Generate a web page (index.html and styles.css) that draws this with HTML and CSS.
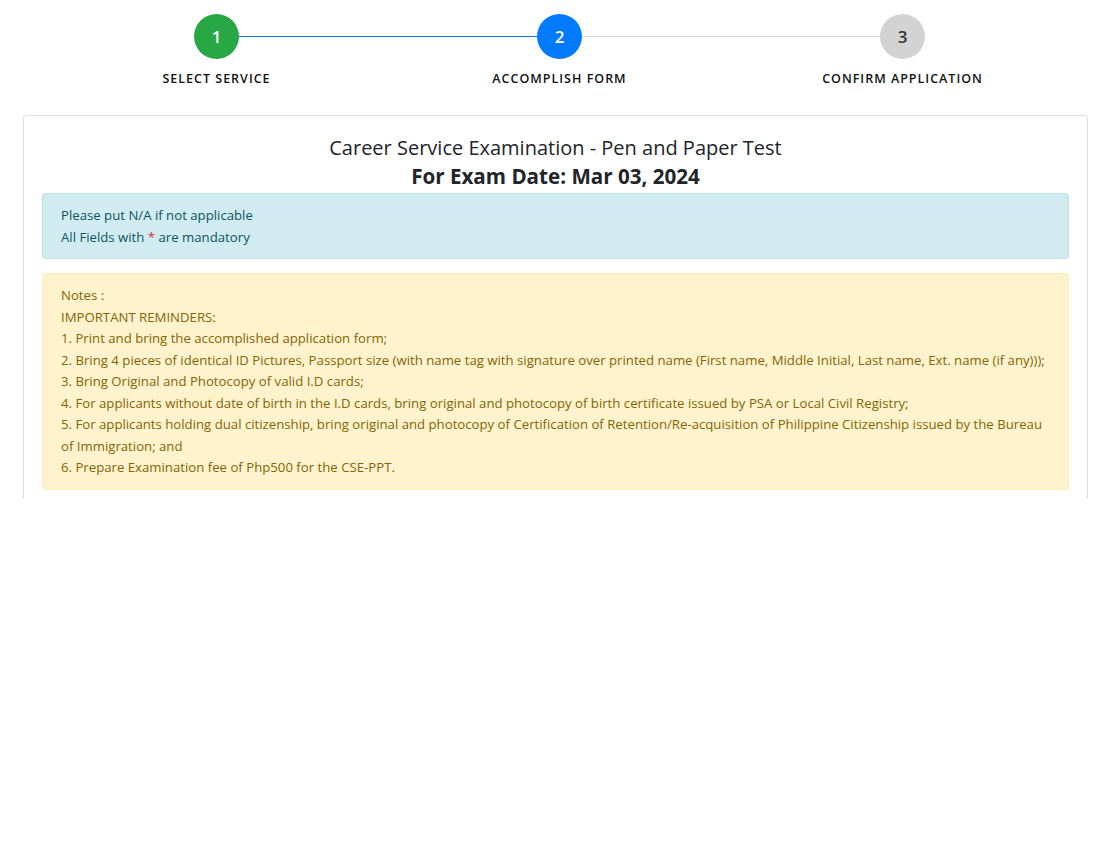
FILE: index.html
```html
<!DOCTYPE html>
<html lang="en">
<head>
<meta charset="utf-8">
<title>Career Service Examination - Application</title>
<link rel="stylesheet" href="styles.css">
</head>
<body>
<div class="stepper">
  <div class="step done">
    <div class="track"><span class="line line-left"></span><span class="circle">1</span><span class="line line-right active"></span></div>
    <div class="label">Select Service</div>
  </div>
  <div class="step current">
    <div class="track"><span class="line line-left active"></span><span class="circle">2</span><span class="line line-right"></span></div>
    <div class="label">Accomplish Form</div>
  </div>
  <div class="step todo">
    <div class="track"><span class="line line-left"></span><span class="circle">3</span><span class="line line-right"></span></div>
    <div class="label">Confirm Application</div>
  </div>
</div>

<div class="card">
  <h1 class="title">
    <span class="title-main">Career Service Examination - Pen and Paper Test</span>
    <span class="title-date">For Exam Date: Mar 03, 2024</span>
  </h1>
  <div class="alert alert-info">
    Please put N/A if not applicable<br>
    All Fields with <span class="req">*</span> are mandatory
  </div>
  <div class="alert alert-warning">
    Notes :<br>
    IMPORTANT REMINDERS:<br>
    1. Print and bring the accomplished application form;<br>
    2. Bring 4 pieces of identical ID Pictures, Passport size (with name tag with signature over printed name (First name, Middle Initial, Last name, Ext. name (if any)));<br>
    3. Bring Original and Photocopy of valid I.D cards;<br>
    4. For applicants without date of birth in the I.D cards, bring original and photocopy of birth certificate issued by PSA or Local Civil Registry;<br>
    5. For applicants holding dual citizenship, bring original and photocopy of Certification of Retention/Re-acquisition of Philippine Citizenship issued by the Bureau of Immigration; and<br>
    6. Prepare Examination fee of Php500 for the CSE-PPT.
  </div>
</div>
</body>
</html>
```
FILE: styles.css
```css
* { box-sizing: border-box; }
body {
  margin: 0;
  background: #fff;
  font-family: "Open Sans", "Noto Sans", sans-serif;
  color: #212529;
}
.stepper {
  display: flex;
  padding: 14px 0 0 45px;
}
.step {
  width: 343px;
  display: flex;
  flex-direction: column;
  align-items: center;
}
.track {
  display: flex;
  align-items: center;
  width: 100%;
  height: 45px;
}
.line {
  flex: 1;
  height: 1px;
  background: transparent;
}
.step.done .line-right,
.step.current .line-left { background: #0d6efd; }
.step.current .line-right,
.step.todo .line-left { background: #d6d6d6; }
.circle {
  width: 45px;
  height: 45px;
  border-radius: 50%;
  display: flex;
  align-items: center;
  justify-content: center;
  font-size: 17px;
  font-weight: 600;
  color: #fff;
}
.done .circle { background: #28a745; }
.current .circle { background: #007bff; }
.todo .circle { background: #d3d3d3; color: #333; }
.label {
  margin-top: 11px;
  font-size: 12.5px;
  font-weight: 600;
  letter-spacing: 1px;
  text-transform: uppercase;
  color: #111;
}
.card {
  margin: 28px 17px 0 23px;
  border: 1px solid #dfdfdf;
  border-bottom: none;
  border-radius: 4px 4px 0 0;
  padding: 20px 18px 9px;
}
.title {
  margin: 0 0 1px;
  text-align: center;
  font-weight: 400;
  color: #212529;
}
.title-main {
  display: block;
  font-size: 20px;
  line-height: 24px;
}
.title-date {
  display: block;
  font-size: 20.6px;
  font-weight: 700;
  line-height: 32px;
}
.alert {
  border: 1px solid transparent;
  border-radius: 3px;
  padding: 11px 18px 10px;
  font-size: 13.2px;
  line-height: 21.5px;
  margin-bottom: 14px;
}
.alert:last-child { margin-bottom: 0; }
.alert-info {
  background: #d1ecf1;
  border-color: #bee5eb;
  color: #0c5460;
}
.alert-warning {
  background: #fff3cd;
  border-color: #ffeeba;
  color: #856404;
}
.req { color: #dc3545; }
```
